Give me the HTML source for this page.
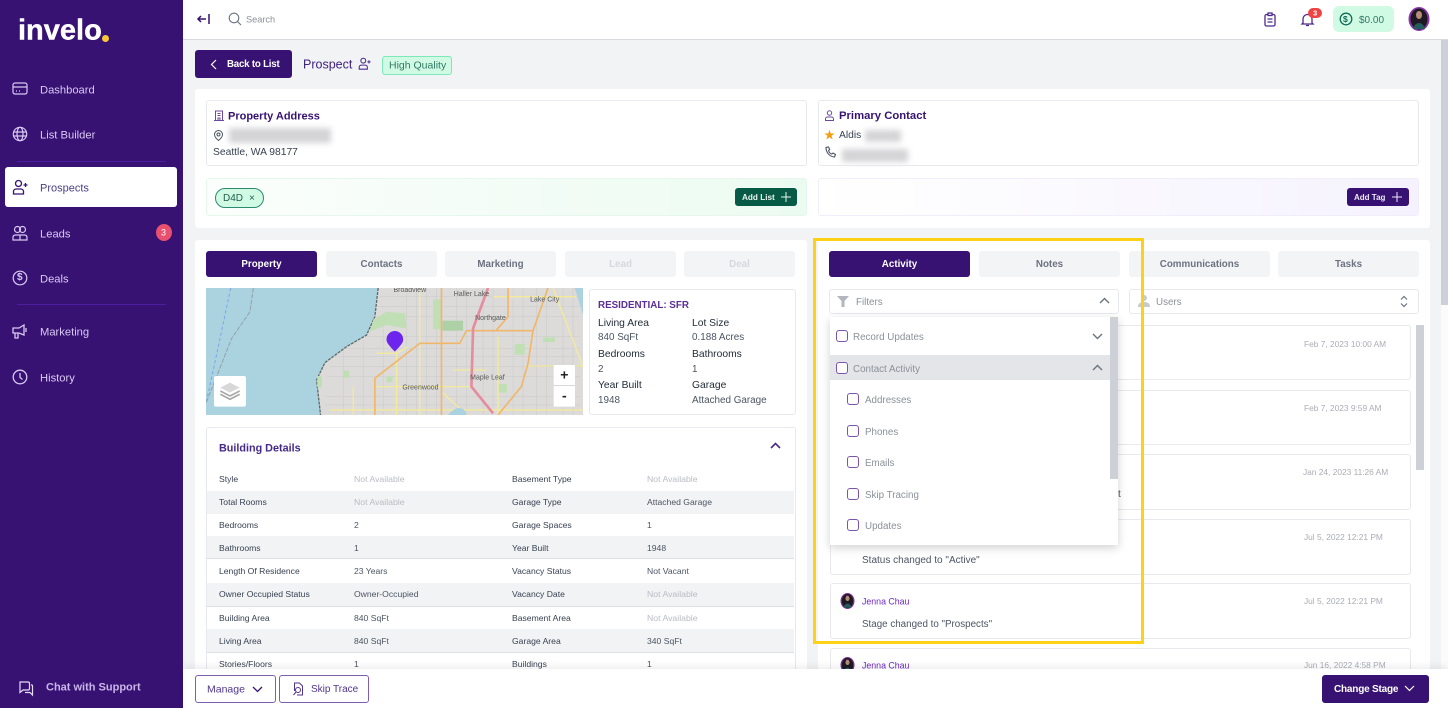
<!DOCTYPE html>
<html lang="en"><head><meta charset="utf-8"><title>Prospect</title>
<style>
*{box-sizing:border-box}
html,body{margin:0;padding:0;width:1448px;height:708px;overflow:hidden;background:#f2f3f5}
body{font-family:"Liberation Sans","Noto Sans CJK SC",sans-serif;font-size:10px;color:#374151}
#w{position:relative;width:1448px;height:708px;overflow:hidden;filter:blur(.3px)}
.a{position:absolute}
.t{position:absolute;white-space:nowrap;transform:translateY(calc(-50% + 1px));line-height:1.2}
.box{position:absolute;background:#fff;border:1px solid #e8e8f0;border-radius:3px}
.nav{color:#d9c9f3;font-size:11.2px;margin-top:1px}
.tab{position:absolute;top:251px;height:26px;background:#f3f4f6;border-radius:3px;color:#6b7280;font-size:9.8px;font-weight:bold;text-align:center;line-height:28px}
.on{background:#371273;color:#fff}
.dis{color:#d5d8dd}
.band{position:absolute;left:207px;width:587px;background:#f2f3f5}
.lb{font-size:8.6px;color:#374151;margin-top:-1px}
.na{font-size:8.7px;color:#b8bcc4;margin-top:-1px}
.val{font-size:8.6px;color:#4b5563;margin-top:-1px}
.inf{font-size:10.3px;color:#1f2937;margin-top:1px}
.inv{font-size:9.9px;color:#4b5563;margin-top:1px}
.it{position:absolute;left:830px;width:581px;background:#fff;border:1px solid #e8e9ee;border-radius:3px}
.dt{font-size:8.35px;color:#a9adb6}
.chk{position:absolute;width:12px;height:12px;border:1.3px solid #7a55b0;border-radius:3px;background:#fff}
.dd{font-size:9.8px;color:#8b9099;margin-top:1px}
svg{position:absolute;overflow:visible}
.blur{position:absolute;background:#d4d4d7;filter:blur(3px)}
</style></head><body><div id="w">

<!-- sidebar -->
<div class="a" style="left:0;top:0;width:183px;height:708px;background:#371273"></div>
<span class="t" style="left:18px;top:30px;font-size:29px;font-weight:bold;color:#fff;-webkit-text-stroke:.4px #fff">invelo</span>
<div class="a" style="left:102px;top:35px;width:7px;height:7px;border-radius:50%;background:#f9c934"></div>

<svg style="left:12px;top:81px" width="16" height="16" viewBox="0 0 16 16" fill="none" stroke="#d9c9f3" stroke-width="1.2"><rect x="1" y="2" width="14" height="11" rx="2"/><path d="M1 6h14M4 10h1M7 10h1"/></svg>
<span class="t nav" style="left:40px;top:89px">Dashboard</span>
<svg style="left:12px;top:126px" width="16" height="16" viewBox="0 0 16 16" fill="none" stroke="#d9c9f3" stroke-width="1.2"><circle cx="8" cy="8" r="6.7"/><ellipse cx="8" cy="8" rx="3" ry="6.7"/><path d="M1.5 6h13M1.5 10h13"/></svg>
<span class="t nav" style="left:40px;top:134px">List Builder</span>
<div class="a" style="left:17px;top:161px;width:149px;height:1px;background:#4d1ca3"></div>
<div class="a" style="left:5px;top:167px;width:172px;height:40px;background:#fff;border-radius:3px"></div>
<svg style="left:12px;top:179px" width="16" height="16" viewBox="0 0 16 16" fill="none" stroke="#371273" stroke-width="1.3"><circle cx="6.5" cy="4.5" r="3"/><path d="M1.5 15v-2.5c0-1.5 1.2-2.5 2.7-2.5h4.6c1.500 0 2.700 1 2.700 2.500V15zM11.500 6h4M13.500 4v4"/></svg>
<span class="t" style="left:40px;top:188px;font-size:11px;color:#4b3f86">Prospects</span>
<svg style="left:12px;top:225px" width="16" height="16" viewBox="0 0 16 16" fill="none" stroke="#d9c9f3" stroke-width="1.2"><circle cx="5.500" cy="4.500" r="3"/><circle cx="10.500" cy="4.500" r="3"/><path d="M1 15v-2.500C1 11 2 10 3.500 10h9c1.500 0 2.500 1 2.500 2.500V15zM8 10v5"/></svg>
<span class="t nav" style="left:40px;top:233px">Leads</span>
<div class="a" style="left:156px;top:224px;width:16px;height:17px;border-radius:50%;background:#e94f6e"></div>
<span class="t" style="left:161px;top:232px;font-size:9px;color:#fff">3</span>
<svg style="left:12px;top:270px" width="16" height="16" viewBox="0 0 16 16" fill="none" stroke="#d9c9f3" stroke-width="1.2"><circle cx="8" cy="8" r="6.800"/></svg>
<span class="t" style="left:17px;top:277px;font-size:10px;font-weight:bold;color:#d9c9f3">$</span>
<span class="t nav" style="left:40px;top:278px">Deals</span>
<div class="a" style="left:17px;top:304px;width:149px;height:1px;background:#4d1ca3"></div>
<svg style="left:12px;top:323px" width="16" height="16" viewBox="0 0 16 16" fill="none" stroke="#d9c9f3" stroke-width="1.300"><path d="M1 5h6l5-3v10L7 10H1zM3 10v5h3v-5M14 5v4"/></svg>
<span class="t nav" style="left:40px;top:331px">Marketing</span>
<svg style="left:12px;top:369px" width="16" height="16" viewBox="0 0 16 16" fill="none" stroke="#d9c9f3" stroke-width="1.300"><circle cx="8" cy="8" r="6.800"/><path d="M8 4v4.500l2.500 2"/></svg>
<span class="t nav" style="left:40px;top:377px">History</span>
<svg style="left:18px;top:680px" width="16" height="16" viewBox="0 0 16 16" fill="none" stroke="#e6dcf6" stroke-width="1.200"><path d="M2 2h8c1 0 1.500.5 1.500 1.500v5c0 1-.5 1.500-1.500 1.500H5l-3 2.500V3.500C2 2.500 2 2 2 2z"/><path d="M13 5h.5c.7 0 1 .5 1 1v9l-2.500-2.500H7"/></svg>
<span class="t" style="left:46px;top:687px;font-size:11px;font-weight:bold;color:#c9b5e8">Chat with Support</span>

<!-- topbar -->
<div class="a" style="left:183px;top:0;width:1265px;height:40px;background:#fff;border-bottom:1px solid #d8dae0"></div>
<svg style="left:197px;top:13px" width="14" height="12" viewBox="0 0 14 12" fill="none" stroke="#371273" stroke-width="1.500"><path d="M1 6h8M4 3L1 6l3 3M12 1v10"/></svg>
<svg style="left:228px;top:12px" width="14" height="14" viewBox="0 0 14 14" fill="none" stroke="#6b7280" stroke-width="1.100"><circle cx="6" cy="6" r="4.800"/><path d="M9.500 9.500L13 13"/></svg>
<span class="t" style="left:246px;top:19px;font-size:9.2px;color:#8b9099">Search</span>
<svg style="left:1264px;top:12px" width="12" height="15" viewBox="0 0 12 15" fill="none" stroke="#4c2a8c" stroke-width="1.300"><rect x="1" y="2.500" width="10" height="11.500" rx="1.500"/><rect x="4" y="1" width="4" height="2.500" fill="#fff"/><path d="M3.500 7h5M3.500 10h5"/></svg>
<svg style="left:1301px;top:12px" width="13" height="15" viewBox="0 0 13 15" fill="none" stroke="#4c2a8c" stroke-width="1.300"><path d="M2 11V7a4.500 4.500 0 0 1 9 0v4l1 1H1zM5 13.500h3"/></svg>
<div class="a" style="left:1308px;top:8px;width:14px;height:10px;border-radius:5px;background:#ef4444"></div>
<span class="t" style="left:1313px;top:12px;font-size:7.500px;font-weight:bold;color:#fff">3</span>
<div class="a" style="left:1333px;top:6px;width:61px;height:26px;border-radius:6px;background:#d1fae5"></div>
<svg style="left:1339px;top:12px" width="14" height="14" viewBox="0 0 14 14" fill="none" stroke="#0f6b57" stroke-width="1.300"><circle cx="7" cy="7" r="5.800"/></svg>
<span class="t" style="left:1343px;top:18px;font-size:8.500px;font-weight:bold;color:#0f6b57">$</span>
<span class="t" style="left:1359px;top:20px;font-size:10px;color:#2f7a66">$0.00</span>
<svg style="left:1408px;top:7px" width="22" height="24" viewBox="0 0 22 24"><ellipse cx="11" cy="12" rx="10.500" ry="12" fill="#8a35a8"/><ellipse cx="11" cy="12" rx="8.500" ry="10.500" fill="#1d1a24"/><ellipse cx="11" cy="8" rx="3" ry="4" fill="#b98c78"/><path d="M5 22c2-8 10-8 12 0z" fill="#245c5c"/></svg>

<!-- page head -->
<div class="a" style="left:195px;top:50px;width:97px;height:28px;background:#371273;border-radius:3px"></div>
<svg style="left:210px;top:59px" width="7" height="11" viewBox="0 0 7 11" fill="none" stroke="#fff" stroke-width="1.200"><path d="M6 1L1.500 5.500 6 10"/></svg>
<span class="t" style="left:227px;top:64px;font-size:9.7px;font-weight:bold;color:#fff;letter-spacing:-.2px">Back to List</span>
<span class="t" style="left:303px;top:64px;font-size:12.500px;color:#3f2180">Prospect</span>
<svg style="left:358px;top:57px" width="13" height="13" viewBox="0 0 16 16" fill="none" stroke="#4c2a8c" stroke-width="1.300"><circle cx="6.500" cy="4.500" r="3"/><path d="M1.500 15v-2.500c0-1.500 1.200-2.500 2.700-2.500h4.600c1.500 0 2.700 1 2.700 2.500V15zM11.500 6h4M13.500 4v4"/></svg>
<div class="a" style="left:382px;top:56px;width:70px;height:19px;background:#d1fae5;border:1px solid #7ce8bb;border-radius:3px"></div>
<span class="t" style="left:389px;top:65px;font-size:10.500px;color:#2f7a66">High Quality</span>

<!-- top card -->
<div class="a" style="left:195px;top:89px;width:1235px;height:139px;background:#fff;border-radius:3px"></div>
<div class="box" style="left:206px;top:100px;width:601px;height:66px"></div>
<svg style="left:214px;top:110px" width="10" height="11" viewBox="0 0 10 11" fill="none" stroke="#6a4aa0" stroke-width="1"><path d="M1.500 10.500V1h7v9.500M0 10.500h10M4 10.500V8h2v2.500M3.500 3.500h3M3.500 5.500h3"/></svg>
<span class="t" style="left:228px;top:116px;font-size:11px;font-weight:bold;color:#371273">Property Address</span>
<svg style="left:214px;top:130px" width="9" height="11" viewBox="0 0 9 11" fill="none" stroke="#4b5563" stroke-width="1"><path d="M4.500 10.500C2 8.500.5 6.500.5 4.500a4 4 0 0 1 8 0c0 2-1.500 4-4 6z"/><circle cx="4.500" cy="4.500" r="1.500"/></svg>
<div class="blur" style="left:229px;top:128px;width:102px;height:15px"></div>
<span class="t" style="left:213px;top:152px;font-size:10.300px;color:#374151">Seattle, WA 98177</span>

<div class="a" style="left:206px;top:178px;width:601px;height:38px;border:1px solid #e6f7ec;border-radius:3px;background:linear-gradient(90deg,#fbfefc,#ecfbf1)"></div>
<div class="a" style="left:215px;top:188px;width:49px;height:20px;border-radius:10px;background:#d1fae5;border:1px solid #2d8a70"></div>
<span class="t" style="left:223px;top:198px;font-size:10px;color:#1f5c4d">D4D</span>
<span class="t" style="left:249px;top:198px;font-size:10px;color:#1f5c4d">×</span>
<div class="a" style="left:735px;top:188px;width:62px;height:18px;border-radius:3px;background:#075b46"></div>
<span class="t" style="left:742px;top:197px;font-size:8.200px;font-weight:bold;color:#e7f5ef">Add List</span>
<svg style="left:781px;top:192px" width="10" height="10" viewBox="0 0 10 10" stroke="#e7f5ef" stroke-width="1"><path d="M5 0v10M0 5h10"/></svg>

<div class="box" style="left:818px;top:100px;width:601px;height:66px"></div>
<svg style="left:825px;top:110px" width="9" height="11" viewBox="0 0 9 11" fill="none" stroke="#6a4aa0" stroke-width="1"><circle cx="4.500" cy="3" r="2.200"/><path d="M.5 10.500V9c0-1.200 1-2 2-2h4c1 0 2 .8 2 2v1.500z"/></svg>
<span class="t" style="left:839px;top:116px;font-size:11.300px;font-weight:bold;color:#371273">Primary Contact</span>
<span class="t" style="left:824px;top:135px;font-size:11px;color:#f59e0b">★</span>
<span class="t" style="left:839px;top:135px;font-size:10.300px;color:#374151">Aldis</span>
<div class="blur" style="left:865px;top:130px;width:36px;height:12px"></div>
<svg style="left:825px;top:146px" width="11" height="12" viewBox="0 0 11 12" fill="none" stroke="#4b5563" stroke-width="1.100"><path d="M1 1.500c0 5 3.500 9 8.500 9.500l1-2.500-2.500-1.500-1.200 1C5 7.500 4 6 3.500 4.500l1.200-1L3.500 1z"/></svg>
<div class="blur" style="left:842px;top:149px;width:66px;height:13px"></div>

<div class="a" style="left:818px;top:178px;width:601px;height:38px;border:1px solid #f1eefb;border-radius:3px;background:linear-gradient(90deg,#fff,#f5f2fd)"></div>
<div class="a" style="left:1347px;top:188px;width:62px;height:18px;border-radius:3px;background:#371273"></div>
<span class="t" style="left:1354px;top:197px;font-size:8px;font-weight:bold;color:#eee8f8">Add Tag</span>
<svg style="left:1392px;top:192px" width="10" height="10" viewBox="0 0 10 10" stroke="#eee8f8" stroke-width="1"><path d="M5 0v10M0 5h10"/></svg>

<!-- left card -->
<div class="a" style="left:195px;top:240px;width:612px;height:440px;background:#fff;border-radius:3px"></div>
<div class="tab on" style="left:206px;width:111px">Property</div>
<div class="tab" style="left:326px;width:111px">Contacts</div>
<div class="tab" style="left:445px;width:111px">Marketing</div>
<div class="tab dis" style="left:565px;width:111px">Lead</div>
<div class="tab dis" style="left:684px;width:111px">Deal</div>

<!-- map -->
<svg style="left:206px;top:288px;overflow:hidden" width="377" height="127" viewBox="18 144 1132 381">
<rect x="18" y="144" width="1132" height="381" fill="#dcdbd9"/>
<path d="M18 144H535L525 230 500 285 440 320 375 368 350 420 362 525H18z" fill="#aad3df"/>
<path d="M1125 144h25v80z" fill="#aad3df"/>
<path d="M535 144L525 230 500 285 440 320 375 368 350 420 362 525" fill="none" stroke="#5f6a68" stroke-width="4" stroke-dasharray="9 3"/>
<path d="M92 144L55 320 18 490" fill="none" stroke="#7ba6e8" stroke-width="3" stroke-dasharray="10 7"/>
<path d="M160 144L150 215 95 295 18 490" fill="none" stroke="#94a0a8" stroke-width="3" stroke-dasharray="14 4"/>
<g stroke="#cacac8" stroke-width="1.500" fill="none">
<path d="M540 170H1140M530 200H1140M510 230H1140M500 290H1140M440 325H1140M400 350H1140M390 380H1140M380 410H1140M375 470H1140M375 495H1140M620 144V525M650 144V525M680 144V525M710 144V525M770 144V525M800 144V525M850 144V525M880 144V525M940 144V525M970 144V525M1010 144V525M1040 144V525M1090 144V525M1120 144V525M430 330V525M490 300V525M550 260V525"/>
</g>
<g fill="#c0dfb4">
<path d="M520 240L560 215 615 220 620 265 560 255 510 275z"/>
<rect x="700" y="178" width="22" height="90"/><rect x="728" y="242" width="62" height="30" fill="#aed0a6"/>
<rect x="560" y="408" width="18" height="18"/><rect x="945" y="312" width="30" height="32"/><rect x="1030" y="292" width="36" height="14"/><rect x="897" y="432" width="24" height="26"/><rect x="432" y="392" width="16" height="22"/><rect x="352" y="408" width="14" height="34"/>
</g>
<g fill="none" stroke="#f4ea9b" stroke-width="4">
<path d="M530 340H590L625 320M590 340V525M660 144V525M525 440H820M460 440V525M880 170H1130M1060 144L1150 380M975 378H1150M895 290V525M760 390H860M390 510H1150M730 460L800 525"/>
</g>
<g fill="none" stroke="#f0b76b" stroke-width="5">
<path d="M525 525V415L660 310H780L800 272H1000L1045 144M725 144V525M925 144V230M1000 272L985 370 965 440 895 525M890 270L925 230"/>
</g>
<path d="M865 144L820 265 815 440 880 520" fill="none" stroke="#e58da0" stroke-width="8"/>
<path d="M745 525C770 495 795 500 800 525z" fill="#aad3df"/>
<g font-family="Liberation Sans,sans-serif" font-size="21" fill="#5a5a5a" text-anchor="middle">
<text x="630" y="156">Broadview</text><text x="815" y="168">Haller Lake</text><text x="1035" y="184">Lake City</text><text x="872" y="240">Northgate</text><text x="863" y="419">Maple Leaf</text><text x="662" y="448">Greenwood</text></g>
<path d="M585 335C570 318 560 310 560 298a25 25 0 0 1 50 0c0 12-10 20-25 37z" fill="#6d25ee"/>
<rect x="42" y="408" width="96" height="92" rx="6" fill="#fff"/>
<path d="M90 428l29 15-29 15-29-15z" fill="#d8d8d8"/><path d="M61 453l29 15 29-15M61 463l29 15 29-15" fill="none" stroke="#a8a8a8" stroke-width="5"/>
<rect x="1062" y="375" width="64" height="125" rx="3" fill="#fff"/><path d="M1062 437h64" stroke="#ccc" stroke-width="2"/>
<text x="1094" y="418" font-family="Liberation Sans,sans-serif" font-size="42" font-weight="bold" fill="#222" text-anchor="middle">+</text>
<text x="1094" y="482" font-family="Liberation Sans,sans-serif" font-size="42" font-weight="bold" fill="#222" text-anchor="middle">-</text>
</svg>

<div class="box" style="left:589px;top:289px;width:207px;height:126px"></div>
<span class="t" style="left:598px;top:305px;font-size:9.800px;font-weight:bold;color:#5b2f95">RESIDENTIAL: SFR</span>
<span class="t inf" style="left:598px;top:322px">Living Area</span><span class="t inf" style="left:692px;top:322px">Lot Size</span>
<span class="t inv" style="left:598px;top:336px">840 SqFt</span><span class="t inv" style="left:692px;top:336px">0.188 Acres</span>
<span class="t inf" style="left:598px;top:353px">Bedrooms</span><span class="t inf" style="left:692px;top:353px">Bathrooms</span>
<span class="t inv" style="left:598px;top:368px">2</span><span class="t inv" style="left:692px;top:368px">1</span>
<span class="t inf" style="left:598px;top:384px">Year Built</span><span class="t inf" style="left:692px;top:384px">Garage</span>
<span class="t inv" style="left:598px;top:399px">1948</span><span class="t inv" style="left:692px;top:399px">Attached Garage</span>

<!-- building -->
<div class="box" style="left:206px;top:427px;width:590px;height:260px"></div>
<span class="t" style="left:219px;top:448px;font-size:10.800px;font-weight:bold;color:#44288a">Building Details</span>
<svg style="left:770px;top:442px" width="11" height="7" viewBox="0 0 11 7" fill="none" stroke="#4c2a8c" stroke-width="1.600"><path d="M1 6l4.500-4.500L10 6"/></svg>
<div class="band" style="top:491px;height:23px"></div>
<div class="band" style="top:536px;height:23px;border-bottom:1px solid #dcdfe4"></div>
<div class="band" style="top:583px;height:24px;border-bottom:1px solid #dcdfe4"></div>
<div class="band" style="top:629px;height:24px;border-bottom:1px solid #dcdfe4"></div>

<span class="t lb" style="left:219px;top:479px">Style</span><span class="t na" style="left:354px;top:479px">Not Available</span><span class="t lb" style="left:512px;top:479px">Basement Type</span><span class="t na" style="left:647px;top:479px">Not Available</span>
<span class="t lb" style="left:219px;top:502px">Total Rooms</span><span class="t na" style="left:354px;top:502px">Not Available</span><span class="t lb" style="left:512px;top:502px">Garage Type</span><span class="t val" style="left:647px;top:502px">Attached Garage</span>
<span class="t lb" style="left:219px;top:525px">Bedrooms</span><span class="t val" style="left:354px;top:525px">2</span><span class="t lb" style="left:512px;top:525px">Garage Spaces</span><span class="t val" style="left:647px;top:525px">1</span>
<span class="t lb" style="left:219px;top:548px">Bathrooms</span><span class="t val" style="left:354px;top:548px">1</span><span class="t lb" style="left:512px;top:548px">Year Built</span><span class="t val" style="left:647px;top:548px">1948</span>
<span class="t lb" style="left:219px;top:571px">Length Of Residence</span><span class="t val" style="left:354px;top:571px">23 Years</span><span class="t lb" style="left:512px;top:571px">Vacancy Status</span><span class="t val" style="left:647px;top:571px">Not Vacant</span>
<span class="t lb" style="left:219px;top:594px">Owner Occupied Status</span><span class="t val" style="left:354px;top:594px">Owner-Occupied</span><span class="t lb" style="left:512px;top:594px">Vacancy Date</span><span class="t na" style="left:647px;top:594px">Not Available</span>
<span class="t lb" style="left:219px;top:618px">Building Area</span><span class="t val" style="left:354px;top:618px">840 SqFt</span><span class="t lb" style="left:512px;top:618px">Basement Area</span><span class="t na" style="left:647px;top:618px">Not Available</span>
<span class="t lb" style="left:219px;top:641px">Living Area</span><span class="t val" style="left:354px;top:641px">840 SqFt</span><span class="t lb" style="left:512px;top:641px">Garage Area</span><span class="t val" style="left:647px;top:641px">340 SqFt</span>
<span class="t lb" style="left:219px;top:664px">Stories/Floors</span><span class="t val" style="left:354px;top:664px">1</span><span class="t lb" style="left:512px;top:664px">Buildings</span><span class="t val" style="left:647px;top:664px">1</span>

<!-- right card -->
<div class="a" style="left:818px;top:240px;width:612px;height:440px;background:#fff;border-radius:3px"></div>
<div class="tab on" style="left:829px;width:141px">Activity</div>
<div class="tab" style="left:979px;width:141px">Notes</div>
<div class="tab" style="left:1129px;width:141px">Communications</div>
<div class="tab" style="left:1278px;width:141px">Tasks</div>

<div class="box" style="left:829px;top:289px;width:290px;height:25px"></div>
<svg style="left:837px;top:296px" width="12" height="11" viewBox="0 0 12 11" fill="#b3b6bc"><path d="M0 0h12L7.500 5v6h-3V5z"/></svg>
<span class="t dd" style="left:856px;top:301px">Filters</span>
<svg style="left:1099px;top:297px" width="11" height="7" viewBox="0 0 11 7" fill="none" stroke="#6b7280" stroke-width="1.400"><path d="M1 6l4.500-4.500L10 6"/></svg>
<div class="box" style="left:1129px;top:289px;width:290px;height:25px"></div>
<svg style="left:1138px;top:295px" width="12" height="12" viewBox="0 0 12 12" fill="#c7cad0"><circle cx="6" cy="3" r="3"/><path d="M0 12c0-4 3-5 6-5s6 1 6 5z"/></svg>
<span class="t dd" style="left:1156px;top:301px">Users</span>
<svg style="left:1400px;top:295px" width="8" height="13" viewBox="0 0 8 13" fill="none" stroke="#6b7280" stroke-width="1.200"><path d="M1 4.500L4 1.500l3 3M1 8.500l3 3 3-3"/></svg>

<div class="it" style="top:325px;height:55px"></div>
<div class="it" style="top:390px;height:55px"></div>
<div class="it" style="top:454px;height:56px"></div>
<div class="it" style="top:519px;height:56px"></div>
<div class="it" style="top:583px;height:56px"></div>
<div class="it" style="top:648px;height:40px"></div>
<div class="a" style="left:1416px;top:325px;width:8px;height:145px;background:#cdd0d7"></div>
<span class="t dt" style="left:1304px;top:343px">Feb 7, 2023 10:00 AM</span>
<span class="t dt" style="left:1304px;top:407px">Feb 7, 2023 9:59 AM</span>
<span class="t dt" style="left:1303px;top:471px">Jan 24, 2023 11:26 AM</span>
<span class="t dt" style="left:1304px;top:536px">Jul 5, 2022 12:21 PM</span>
<span class="t dt" style="left:1304px;top:600px">Jul 5, 2022 12:21 PM</span>
<span class="t dt" style="left:1304px;top:664px">Jun 16, 2022 4:58 PM</span>
<span class="t" style="left:1118px;top:494px;font-size:10px;color:#4b5563">t</span>
<span class="t" style="left:862px;top:560px;font-size:10px;color:#4b5563">Status changed to "Active"</span>
<svg style="left:840px;top:593px" width="15" height="16" viewBox="0 0 22 24"><ellipse cx="11" cy="12" rx="10.500" ry="12" fill="#7d2f9c"/><ellipse cx="11" cy="12" rx="8.500" ry="10.500" fill="#1d1a24"/><ellipse cx="11" cy="8" rx="3" ry="4" fill="#b98c78"/><path d="M5 22c2-8 10-8 12 0z" fill="#245c5c"/></svg>
<span class="t" style="left:862px;top:601px;font-size:8.800px;color:#6d28c9">Jenna Chau</span>
<span class="t" style="left:862px;top:624px;font-size:9.800px;color:#4b5563">Stage changed to "Prospects"</span>
<svg style="left:840px;top:657px" width="15" height="16" viewBox="0 0 22 24"><ellipse cx="11" cy="12" rx="10.500" ry="12" fill="#7d2f9c"/><ellipse cx="11" cy="12" rx="8.500" ry="10.500" fill="#1d1a24"/><ellipse cx="11" cy="8" rx="3" ry="4" fill="#b98c78"/><path d="M5 22c2-8 10-8 12 0z" fill="#245c5c"/></svg>
<span class="t" style="left:862px;top:665px;font-size:8.800px;color:#6d28c9">Jenna Chau</span>

<!-- dropdown -->
<div class="a" style="left:830px;top:317px;width:288px;height:228px;background:#fff;box-shadow:0 3px 9px rgba(0,0,0,.18)"></div>
<div class="a" style="left:830px;top:355px;width:280px;height:25px;background:#e4e5e9"></div>
<div class="a" style="left:1110px;top:317px;width:8px;height:162px;background:#cdd0d7"></div>
<div class="chk" style="left:836px;top:330px"></div><span class="t dd" style="left:853px;top:336px">Record Updates</span>
<svg style="left:1092px;top:333px" width="11" height="7" viewBox="0 0 11 7" fill="none" stroke="#6b7280" stroke-width="1.400"><path d="M1 1l4.500 4.500L10 1"/></svg>
<div class="chk" style="left:836px;top:362px"></div><span class="t dd" style="left:853px;top:368px">Contact Activity</span>
<svg style="left:1092px;top:364px" width="11" height="7" viewBox="0 0 11 7" fill="none" stroke="#6b7280" stroke-width="1.400"><path d="M1 6l4.500-4.500L10 6"/></svg>
<div class="chk" style="left:847px;top:393px"></div><span class="t dd" style="left:865px;top:399px">Addresses</span>
<div class="chk" style="left:847px;top:425px"></div><span class="t dd" style="left:865px;top:431px">Phones</span>
<div class="chk" style="left:847px;top:456px"></div><span class="t dd" style="left:865px;top:462px">Emails</span>
<div class="chk" style="left:847px;top:488px"></div><span class="t dd" style="left:865px;top:494px">Skip Tracing</span>
<div class="chk" style="left:847px;top:519px"></div><span class="t dd" style="left:865px;top:525px">Updates</span>

<!-- page scrollbar -->
<div class="a" style="left:1441px;top:40px;width:7px;height:629px;background:#fbfbfc"></div>
<div class="a" style="left:1441px;top:40px;width:7px;height:265px;background:#cdd0d7"></div>

<!-- bottom bar -->
<div class="a" style="left:183px;top:669px;width:1265px;height:39px;background:#fff;box-shadow:0 -3px 7px rgba(0,0,0,.07)"></div>
<div class="a" style="left:195px;top:675px;width:81px;height:28px;border:1px solid #7d5fae;border-radius:3px;background:#fff"></div>
<span class="t" style="left:207px;top:689px;font-size:10.500px;color:#4f3490">Manage</span>
<svg style="left:252px;top:686px" width="11" height="7" viewBox="0 0 11 7" fill="none" stroke="#371273" stroke-width="1.300"><path d="M1 1l4.500 4.500L10 1"/></svg>
<div class="a" style="left:279px;top:675px;width:90px;height:28px;border:1px solid #7d5fae;border-radius:3px;background:#fff"></div>
<svg style="left:293px;top:682px" width="11" height="14" viewBox="0 0 11 14" fill="none" stroke="#4f3490" stroke-width="1"><path d="M1.500 9V1h5l3 3v9H4"/><circle cx="5" cy="8" r="2.500"/><path d="M3 10l-2.500 3"/></svg>
<span class="t" style="left:311px;top:689px;font-size:10px;color:#4f3490">Skip Trace</span>
<div class="a" style="left:1322px;top:675px;width:107px;height:28px;background:#371273;border-radius:3px"></div>
<span class="t" style="left:1334px;top:689px;font-size:10px;font-weight:bold;color:#fff;letter-spacing:-.2px">Change Stage</span>
<svg style="left:1404px;top:685px" width="11" height="7" viewBox="0 0 11 7" fill="none" stroke="#fff" stroke-width="1.200"><path d="M1 1l4.500 4.500L10 1"/></svg>

<!-- highlight -->
<div class="a" style="left:813px;top:238px;width:331px;height:406px;border:3px solid #fcd116"></div>
</div></body></html>
